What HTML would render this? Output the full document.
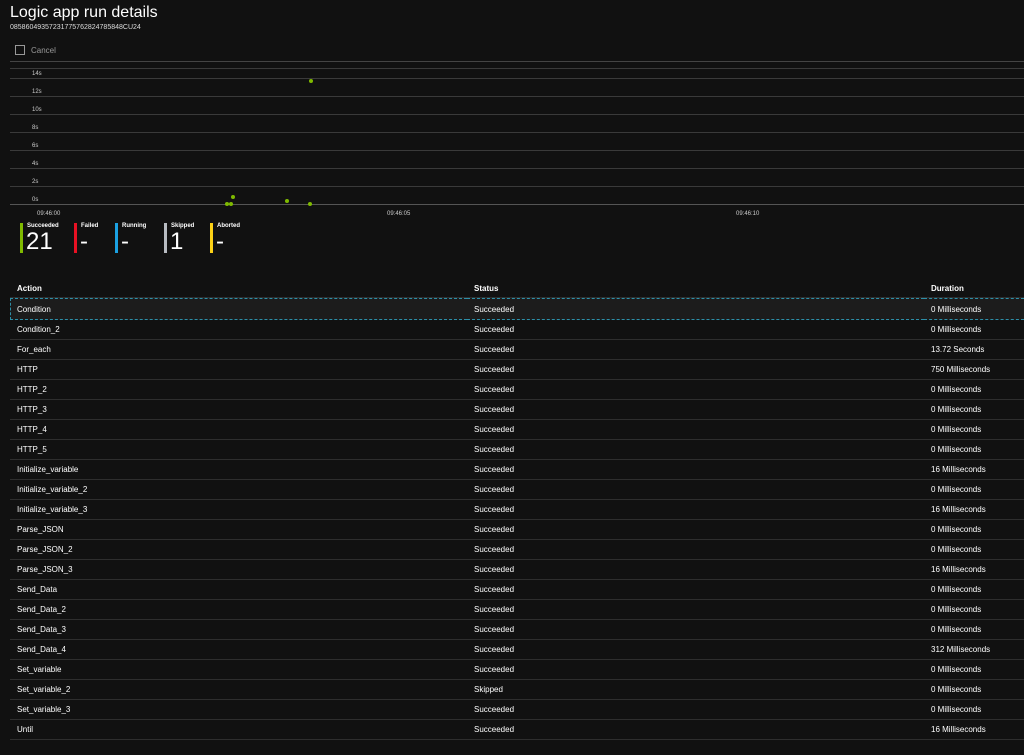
<!DOCTYPE html><html><head><style>
body{margin:0;background:#111;width:1024px;height:755px;overflow:hidden;font-family:"Liberation Sans",sans-serif;color:#fff;position:relative}
.a{position:absolute}
.g{position:absolute;left:10px;right:0;height:1px;background:#3a3a3a}
.yl{position:absolute;font-size:6px;color:#ccc;left:32px}
.xl{position:absolute;font-size:6px;color:#ccc;top:211px}
.d{position:absolute;width:4px;height:4px;border-radius:2px;background:#7fba00}
.st{position:absolute;top:223px}
.st .b{position:absolute;left:0;top:0;width:3px;height:30px}
.st .l{position:absolute;left:7px;top:0;font-size:6px;font-weight:bold;white-space:nowrap}
.st .n{position:absolute;left:6px;top:7px;font-size:24px;line-height:24px}
table{position:absolute;left:10px;top:280px;width:1014px;border-collapse:separate;border-spacing:0;font-size:8px}
td,th{height:19px;padding:0 0 0 7px;text-align:left;border-bottom:1px solid #2e2e2e}
th{font-weight:bold;height:17px}
tr.s td{background:#1c1c1c;border-top:1px dashed #2d8fa8;border-bottom:1px dashed #2d8fa8;height:19px;padding-top:1px}
tr.s td:first-child{border-left:1px dashed #2d8fa8;padding-left:6px}
</style></head><body>
<div class="a" style="left:10px;top:4px;font-size:16px">Logic app run details</div>
<div class="a" style="left:10px;top:24px;font-size:7px;color:#ddd">08586049357231775762824785848CU24</div>
<div class="a" style="left:15px;top:45px;width:8px;height:8px;border:1px solid #999"></div>
<div class="a" style="left:31px;top:46px;font-size:8px;color:#999">Cancel</div>
<div class="g" style="top:61px;background:#444"></div>
<div class="g" style="top:68px"></div>
<div class="g" style="top:78px"></div><div class="yl" style="top:71px">14s</div>
<div class="g" style="top:96px"></div><div class="yl" style="top:89px">12s</div>
<div class="g" style="top:114px"></div><div class="yl" style="top:107px">10s</div>
<div class="g" style="top:132px"></div><div class="yl" style="top:125px">8s</div>
<div class="g" style="top:150px"></div><div class="yl" style="top:143px">6s</div>
<div class="g" style="top:168px"></div><div class="yl" style="top:161px">4s</div>
<div class="g" style="top:186px"></div><div class="yl" style="top:179px">2s</div>
<div class="g" style="top:204px;background:#555"></div><div class="yl" style="top:197px">0s</div>
<div class="xl" style="left:37px">09:46:00</div><div class="xl" style="left:387px">09:46:05</div><div class="xl" style="left:736px">09:46:10</div>
<div class="d" style="left:309px;top:79px"></div>
<div class="d" style="left:231px;top:195px"></div>
<div class="d" style="left:285px;top:199px"></div>
<div class="d" style="left:225px;top:202px"></div>
<div class="d" style="left:229px;top:202px"></div>
<div class="d" style="left:308px;top:202px"></div>
<div class="st" style="left:20px"><div class="b" style="background:#7fba00"></div><div class="l">Succeeded</div><div class="n">21</div></div>
<div class="st" style="left:74px"><div class="b" style="background:#e81123"></div><div class="l">Failed</div><div class="n">-</div></div>
<div class="st" style="left:115px"><div class="b" style="background:#1ba1e2"></div><div class="l">Running</div><div class="n">-</div></div>
<div class="st" style="left:164px"><div class="b" style="background:#b8bcc2"></div><div class="l">Skipped</div><div class="n">1</div></div>
<div class="st" style="left:210px"><div class="b" style="background:#fcd116"></div><div class="l">Aborted</div><div class="n">-</div></div>
<table>
<tr><th style="width:450px">Action</th><th style="width:450px">Status</th><th>Duration</th></tr>
<tr class="s"><td>Condition</td><td>Succeeded</td><td>0 Milliseconds</td></tr>
<tr><td>Condition_2</td><td>Succeeded</td><td>0 Milliseconds</td></tr>
<tr><td>For_each</td><td>Succeeded</td><td>13.72 Seconds</td></tr>
<tr><td>HTTP</td><td>Succeeded</td><td>750 Milliseconds</td></tr>
<tr><td>HTTP_2</td><td>Succeeded</td><td>0 Milliseconds</td></tr>
<tr><td>HTTP_3</td><td>Succeeded</td><td>0 Milliseconds</td></tr>
<tr><td>HTTP_4</td><td>Succeeded</td><td>0 Milliseconds</td></tr>
<tr><td>HTTP_5</td><td>Succeeded</td><td>0 Milliseconds</td></tr>
<tr><td>Initialize_variable</td><td>Succeeded</td><td>16 Milliseconds</td></tr>
<tr><td>Initialize_variable_2</td><td>Succeeded</td><td>0 Milliseconds</td></tr>
<tr><td>Initialize_variable_3</td><td>Succeeded</td><td>16 Milliseconds</td></tr>
<tr><td>Parse_JSON</td><td>Succeeded</td><td>0 Milliseconds</td></tr>
<tr><td>Parse_JSON_2</td><td>Succeeded</td><td>0 Milliseconds</td></tr>
<tr><td>Parse_JSON_3</td><td>Succeeded</td><td>16 Milliseconds</td></tr>
<tr><td>Send_Data</td><td>Succeeded</td><td>0 Milliseconds</td></tr>
<tr><td>Send_Data_2</td><td>Succeeded</td><td>0 Milliseconds</td></tr>
<tr><td>Send_Data_3</td><td>Succeeded</td><td>0 Milliseconds</td></tr>
<tr><td>Send_Data_4</td><td>Succeeded</td><td>312 Milliseconds</td></tr>
<tr><td>Set_variable</td><td>Succeeded</td><td>0 Milliseconds</td></tr>
<tr><td>Set_variable_2</td><td>Skipped</td><td>0 Milliseconds</td></tr>
<tr><td>Set_variable_3</td><td>Succeeded</td><td>0 Milliseconds</td></tr>
<tr><td>Until</td><td>Succeeded</td><td>16 Milliseconds</td></tr>
</table>
</body></html>
